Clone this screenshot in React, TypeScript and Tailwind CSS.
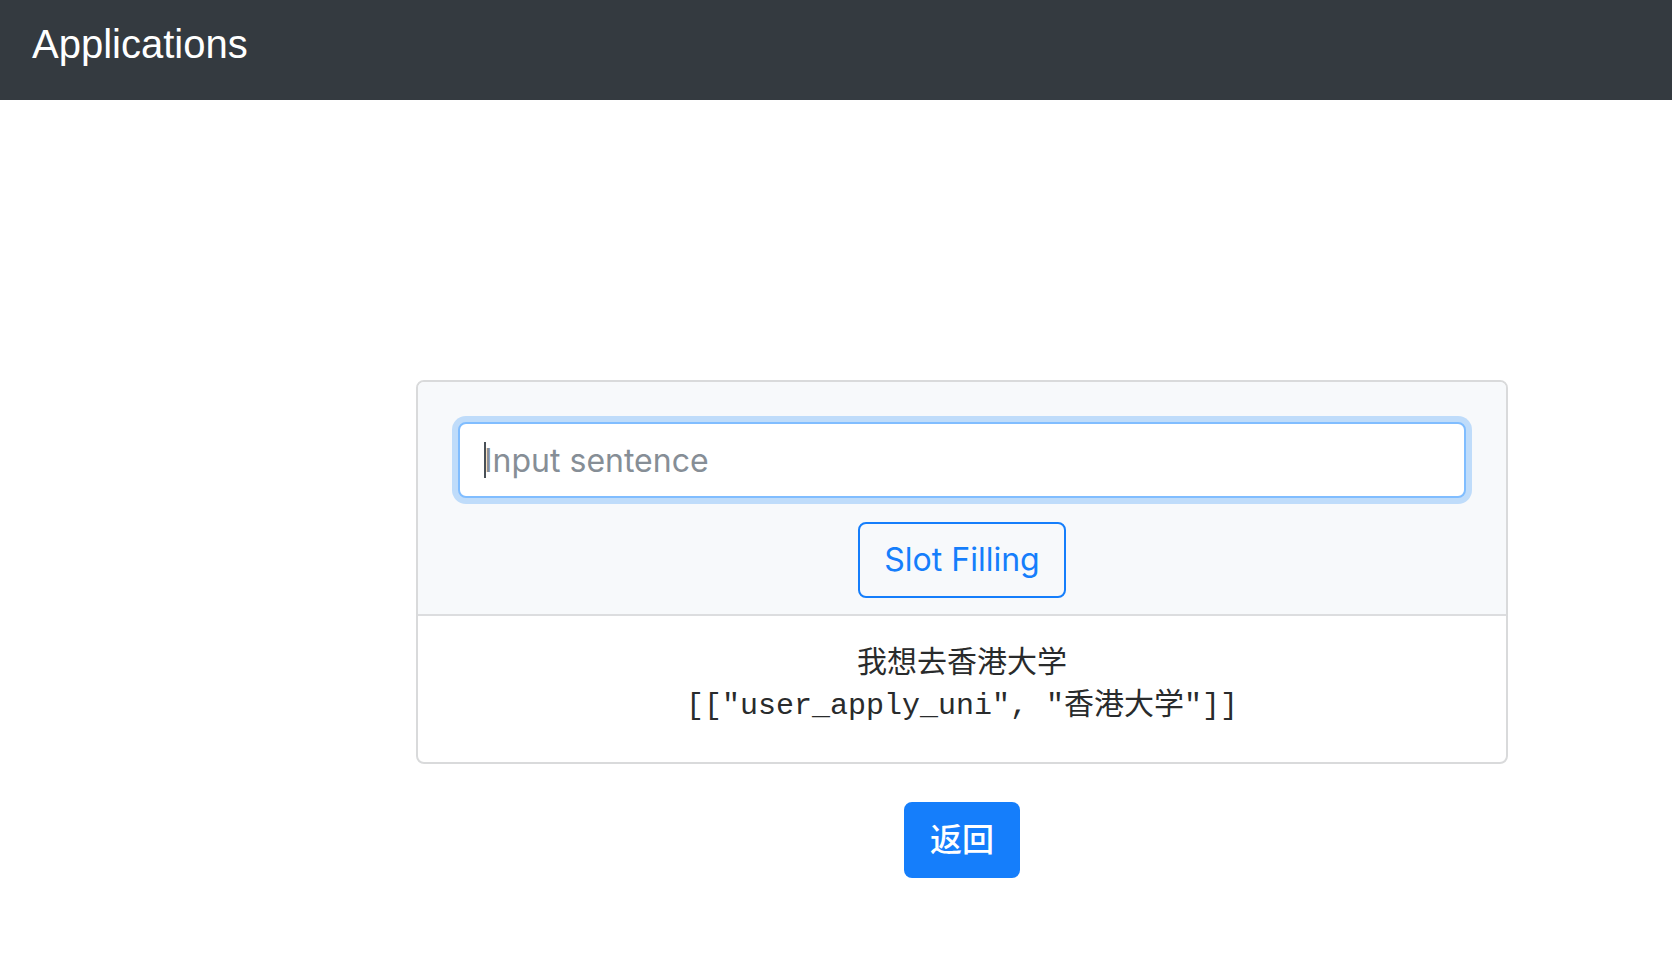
import { useState } from "react";

export default function App() {
  const [sentence, setSentence] = useState("");

  return (
    <div className="min-h-screen bg-white font-['Inter','Noto_Sans_CJK_SC',sans-serif] text-[#292b2c]">
      <header className="flex h-[100px] items-start bg-[#343a40] px-8 pt-4">
        <a href="#" className="font-['Liberation_Sans',sans-serif] text-[40px] leading-[56px] text-white">
          Applications
        </a>
      </header>

      <main className="mr-[164px] ml-[416px] flex flex-col items-center pt-[280px] pb-8">
        <section className="w-full overflow-hidden rounded-lg border-2 border-[#d9dadb] bg-white">
          <form
            className="flex flex-col items-center gap-6 border-b-2 border-[#dcdddf] bg-[#f7f9fb] px-10 pt-10 pb-4"
            onSubmit={(event) => event.preventDefault()}
          >
            <div className="relative w-full">
              <input
                type="text"
                aria-label="Input sentence"
                placeholder="Input sentence"
                value={sentence}
                onChange={(event) => setSentence(event.target.value)}
                className="block h-[76px] w-full rounded-lg border-2 border-[#80bdff] bg-white px-6 text-[32px] leading-[48px] caret-transparent ring-[6px] ring-[#bfdcfa] outline-none placeholder:text-[#868e96]"
              />
              <span className="pointer-events-none absolute top-5 left-[26px] h-9 w-0.5 bg-[#495057]" />
            </div>
            <button
              type="submit"
              className="h-[76px] rounded-lg border-2 border-[#157efb] px-6 text-[32px] leading-[48px] text-[#157efb]"
            >
              Slot Filling
            </button>
          </form>
          <pre className="px-10 pt-[27px] pb-[35px] text-center font-['Liberation_Mono','Noto_Sans_CJK_SC',monospace] text-[30px] leading-[42px]">
            {'我想去香港大学\n[["user_apply_uni", "香港大学"]]'}
          </pre>
        </section>

        <button
          type="button"
          className="mt-[38px] h-[76px] rounded-lg bg-[#157efb] px-[26px] text-[32px] leading-[48px] font-medium text-white"
        >
          返回
        </button>
      </main>
    </div>
  );
}
